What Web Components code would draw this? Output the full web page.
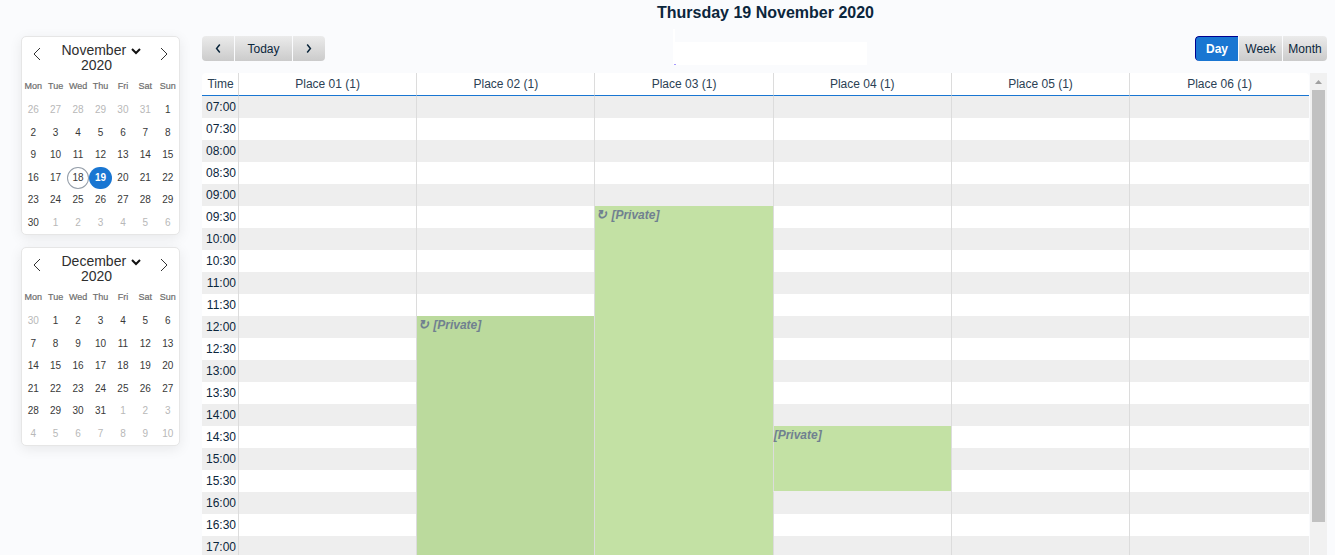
<!DOCTYPE html>
<html lang="en">
<head>
<meta charset="utf-8">
<title>Day planner</title>
<style>
  body { margin: 0; background: #fafbfd; color: #0b263c; font: 12px/16px "Liberation Sans", Arial, sans-serif; }
</style>
</head>
<body>
<planner-app></planner-app>

<template id="app-tpl">
  <style>
    :host { display: flex; gap: 22px; height: 100vh; padding: 0 8px 0 21px; box-sizing: border-box; overflow: hidden; }
    aside { flex: none; display: flex; flex-direction: column; gap: 12px; width: 159px; padding-top: 36px; }
    main { flex: 1; min-width: 0; display: flex; flex-direction: column; }
    h1 { margin: 0; height: 36px; box-sizing: border-box; padding: 3px 0 0 2px; font-size: 16px; line-height: 20px; text-align: center; }
    nav { display: grid; grid-template-columns: 1fr auto 1fr; height: 25px; margin-bottom: 12px; }
    nav > :last-child { justify-self: end; }
    .blank { padding-left: 10px; }
    .blank div { position: relative; width: 194px; height: 23px; margin-top: 6px; background: #fff; }
    .blank div::before { content: ""; position: absolute; left: 0; bottom: 0; width: 2px; height: 36px; background: #fff; }
    .blank div::after { content: ""; position: absolute; left: 1px; bottom: 0; width: 2px; height: 1px; background: #a79bff; }
    .board { flex: 1; min-height: 0; display: flex; overflow: hidden; }
    day-grid { flex: 1; min-width: 0; }
  </style>
  <aside>
    <mini-calendar month="November" year="2020" lead="26 27 28 29 30 31" days="30" trail="6" today="18" selected="19"></mini-calendar>
    <mini-calendar month="December" year="2020" lead="30" days="31" trail="10"></mini-calendar>
  </aside>
  <main>
    <h1>Thursday 19 November 2020</h1>
    <nav>
      <button-group>
        <tool-button kind="arrow" label="Previous day"><svg width="6" height="9" viewBox="0 0 6 9" fill="none" stroke="#0b263c" stroke-width="1.5"><path d="M4.8 .6 1.6 4.5 4.8 8.4"/></svg></tool-button>
        <tool-button kind="wide">Today</tool-button>
        <tool-button kind="arrow" label="Next day"><svg width="6" height="9" viewBox="0 0 6 9" fill="none" stroke="#0b263c" stroke-width="1.5"><path d="M1.2 .6 4.4 4.5 1.2 8.4"/></svg></tool-button>
      </button-group>
      <div class="blank"><div></div></div>
      <button-group>
        <tool-button kind="active">Day</tool-button>
        <tool-button kind="view">Week</tool-button>
        <tool-button>Month</tool-button>
      </button-group>
    </nav>
    <div class="board"><day-grid></day-grid><scroll-track></scroll-track></div>
  </main>
</template>

<template id="group-tpl">
  <style>
    :host { display: inline-flex; justify-self: start; gap: 1px; height: 25px; border-radius: 4px; overflow: hidden; }
  </style>
  <slot></slot>
</template>

<template id="button-tpl">
  <style>
    :host { display: block; }
    button { display: flex; align-items: center; justify-content: center; width: 44px; height: 25px; padding: 0; border: 0; background: linear-gradient(#ebebeb, #cbcbcb); color: inherit; font: inherit; }
    :host([kind=arrow]) button { width: 32px; }
    :host([kind=wide]) button { width: 57px; }
    :host([kind=view]) button { width: 43px; }
    :host([kind=active]) button { width: 43px; background: #1976d2; color: #fff; font-weight: bold; border: 1px solid #00008f; border-width: 1px 0 0 1px; border-top-left-radius: 4px; border-bottom-left-radius: 4px; }
  </style>
  <button type="button"><slot></slot></button>
</template>

<template id="calendar-tpl">
  <style>
    :host { display: block; box-sizing: border-box; border: 1px solid #e6e6e6; border-radius: 5px; background: #fff; box-shadow: 0 3px 13px rgba(0,0,0,.08); color: #393939; }
    header { display: flex; justify-content: space-between; height: 40px; box-sizing: border-box; padding: 6px 9px 0; color: #2e2e2e; }
    .arrow { width: 12px; height: 22px; padding: 0; border: 0; background: none; display: flex; align-items: center; justify-content: center; }
    .title { display: flex; flex-direction: column; align-items: center; }
    .month { position: relative; display: block; height: 15px; }
    select, input { appearance: none; box-sizing: border-box; border: 0; margin: 0; padding: 0; background: none; color: inherit; font: 14px/15px "Liberation Sans", Arial, sans-serif; height: 15px; outline: 0; }
    select { width: 80px; padding-left: 1px; display: block; }
    .month svg { position: absolute; right: 0; top: 5px; pointer-events: none; }
    input { width: 40px; text-align: center; margin-right: 8px; }
    .week, .days { display: grid; grid-template-columns: repeat(7, 1fr); text-align: center; }
    .week { height: 22px; line-height: 18px; font-size: 9px; color: #6e6e6e; -webkit-text-stroke: .2px #6e6e6e; }
    .days { grid-template-rows: repeat(6, 1fr); height: 135px; }
    .days button { min-width: 0; border: 1px solid transparent; border-radius: 50%; padding: 0; background: none; color: inherit; font: 10px/12px "Liberation Sans", Arial, sans-serif; }
    .days .off { color: #b8b8b8; }
    .days .today { border-color: #959ea9; }
    .days .sel { background: #1976d2; color: #fff; font-weight: bold; }
  </style>
  <header>
    <button class="arrow" type="button" aria-label="Previous month"><svg width="8" height="14" viewBox="0 0 8 14" fill="none" stroke="#333"><path d="M7 1 1 7l6 6"/></svg></button>
    <div class="title">
      <label class="month"><select aria-label="Month"></select><svg width="10" height="7" viewBox="0 0 10 7" fill="none" stroke="#111" stroke-width="2"><path d="M1 1 5 5 9 1"/></svg></label>
      <input type="text" aria-label="Year">
    </div>
    <button class="arrow" type="button" aria-label="Next month"><svg width="8" height="14" viewBox="0 0 8 14" fill="none" stroke="#333"><path d="m1 1 6 6-6 6"/></svg></button>
  </header>
  <div class="week"><span>Mon</span><span>Tue</span><span>Wed</span><span>Thu</span><span>Fri</span><span>Sat</span><span>Sun</span></div>
  <div class="days"></div>
</template>

<template id="grid-tpl">
  <style>
    :host { display: block; }
    table { width: 100%; table-layout: fixed; border-collapse: separate; border-spacing: 0; background: #fff; border-radius: 4px 4px 0 0; }
    col.time { width: 36px; }
    col.place { width: 16.1%; }
    th, td { box-sizing: border-box; height: 22px; padding: 0; font-weight: normal; line-height: 20px; }
    thead th { height: 23px; line-height: 22px; border-bottom: 1px solid #1976d2; color: #2b4154; }
    thead th.time { padding-left: 1px; }
    tbody th { text-align: right; padding-right: 2px; line-height: 22px; }
    :is(th, td):not(.time) { border-left: 1px solid #dcdcdc; }
    tbody tr:nth-child(odd) { background: #eee; }
    td.event { vertical-align: top; padding-left: 1px; line-height: 18px; background: #c3e1a4; color: #708090; font-style: italic; font-weight: bold; }
    td.deep { background: #bbda9d; }
    td.ended { border-bottom: 1px solid #eee; padding-left: 0; }
    td i { display: inline-block; width: 15px; font-size: 13px; line-height: 16px; }
  </style>
  <table>
    <colgroup><col class="time"><col class="place"><col class="place"><col class="place"><col class="place"><col class="place"><col></colgroup>
    <thead><tr></tr></thead>
    <tbody></tbody>
  </table>
</template>

<template id="scroll-tpl">
  <style>
    :host { display: flex; flex-direction: column; flex: none; width: 17px; margin-left: 1px; background: #f1f1f1; }
    .up { display: flex; align-items: center; justify-content: center; height: 17px; }
    .room { flex: 1; }
    .thumb { height: 93%; margin: 0 2px; background: #c1c1c1; }
  </style>
  <div class="up"><svg width="7" height="4" viewBox="0 0 7 4"><path d="M0 4 3.5 0 7 4z" fill="#a0a0a0"/></svg></div>
  <div class="room"><div class="thumb"></div></div>
</template>

<script>
  const fill = (host, id) => {
    const root = host.attachShadow({ mode: "open" });
    root.append(document.getElementById(id).content.cloneNode(true));
    return root;
  };

  customElements.define("button-group", class extends HTMLElement {
    connectedCallback() { if (!this.shadowRoot) fill(this, "group-tpl"); }
  });

  customElements.define("tool-button", class extends HTMLElement {
    connectedCallback() {
      if (this.shadowRoot) return;
      const root = fill(this, "button-tpl");
      if (this.hasAttribute("label")) root.querySelector("button").setAttribute("aria-label", this.getAttribute("label"));
    }
  });

  customElements.define("mini-calendar", class extends HTMLElement {
    connectedCallback() {
      if (this.shadowRoot) return;
      const root = fill(this, "calendar-tpl");
      const get = n => this.getAttribute(n);
      root.querySelector("select").add(new Option(get("month")));
      root.querySelector("input").value = get("year");
      const days = root.querySelector(".days");
      const add = (n, cls) => {
        const b = document.createElement("button");
        b.type = "button";
        b.textContent = n;
        b.className = cls;
        days.append(b);
      };
      get("lead").split(" ").forEach(n => add(n, "off"));
      for (let d = 1; d <= +get("days"); d++)
        add(d, d == get("today") ? "today" : d == get("selected") ? "sel" : "");
      for (let d = 1; d <= +get("trail"); d++) add(d, "off");
    }
  });

  customElements.define("day-grid", class extends HTMLElement {
    connectedCallback() {
      if (this.shadowRoot) return;
      const root = fill(this, "grid-tpl");
      const places = 6, rows = 21;
      // start and span are counted in half-hour rows from 07:00
      const events = [
        { place: 2, start: 10, span: 11, cls: "event deep", repeat: true },
        { place: 3, start: 5, span: 16, cls: "event", repeat: true },
        { place: 4, start: 15, span: 3, cls: "event ended" }
      ];
      let head = '<th class="time" scope="col">Time</th>';
      for (let p = 1; p <= places; p++) head += `<th scope="col">Place 0${p} (1)</th>`;
      root.querySelector("thead tr").innerHTML = head;
      let body = "";
      for (let r = 0; r < rows; r++) {
        const time = String(7 + (r >> 1)).padStart(2, "0") + (r % 2 ? ":30" : ":00");
        body += `<tr><th class="time" scope="row">${time}</th>`;
        for (let p = 1; p <= places; p++) {
          const e = events.find(e => e.place === p && r >= e.start && r < e.start + e.span);
          if (!e) body += "<td></td>";
          else if (e.start === r) body += `<td class="${e.cls}" rowspan="${e.span}">${e.repeat ? "<i>↻</i>" : ""}[Private]</td>`;
        }
        body += "</tr>";
      }
      root.querySelector("tbody").innerHTML = body;
    }
  });

  customElements.define("scroll-track", class extends HTMLElement {
    connectedCallback() { if (!this.shadowRoot) fill(this, "scroll-tpl"); }
  });

  customElements.define("planner-app", class extends HTMLElement {
    connectedCallback() { if (!this.shadowRoot) fill(this, "app-tpl"); }
  });
</script>
</body>
</html>
